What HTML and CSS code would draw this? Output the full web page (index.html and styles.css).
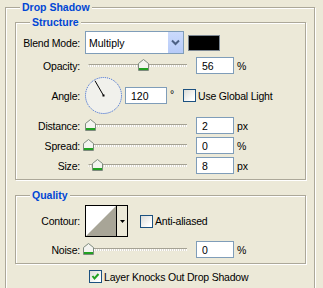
FILE: index.html
```html
<!DOCTYPE html>
<html lang="en">
<head>
    <meta charset="UTF-8">
    <title>Drop Shadow</title>
    <link rel="stylesheet" href="styles.css">
</head>
<body>
    <fieldset class="panel">
        <legend>Drop Shadow</legend>

        <!-- Structure -->
        <fieldset class="group">
            <legend>Structure</legend>
            <div class="row row-blend">
                <span class="lbl">Blend Mode:</span>
                <div class="combo">
                    <span class="combo-text">Multiply</span>
                    <span class="combo-btn">
                        <svg width="9" height="7" viewBox="0 0 9 7"><path d="M1 1.5 L4.5 5 L8 1.5" fill="none" stroke="#4d6185" stroke-width="2"/></svg>
                    </span>
                </div>
                <span class="swatch"></span>
            </div>
            <div class="row">
                <span class="lbl">Opacity:</span>
                <div class="slider">
                    <div class="track"></div>
                    <span class="thumb" style="left: 56%"><svg width="11" height="12" viewBox="0 0 11 12"><polygon points="0.5,11.5 0.5,4.5 5.5,0.5 10.5,4.5 10.5,11.5" fill="#f4f4f0" stroke="#7e8a7e"/><rect x="1" y="9" width="9" height="2" fill="#21a121"/></svg></span>
                </div>
                <input class="num" type="text" value="56">
                <span class="unit">%</span>
            </div>
            <div class="row row-angle">
                <span class="lbl">Angle:</span>
                <svg class="dial" width="37" height="37" viewBox="0 0 37 37">
                    <circle cx="18.5" cy="18.5" r="18" fill="#f1f1ec" stroke="#2c5fd3" stroke-dasharray="1 1"/>
                    <line x1="18.5" y1="18.5" x2="10" y2="3.8" stroke="#000"/>
                    <rect x="17.5" y="17.5" width="2" height="2" fill="#000"/>
                </svg>
                <input class="num num-wide" type="text" value="120">
                <span class="deg">°</span>
                <span class="check"></span>
                <span class="check-text">Use Global Light</span>
            </div>
            <div class="row">
                <span class="lbl">Distance:</span>
                <div class="slider">
                    <div class="track"></div>
                    <span class="thumb" style="left: 2.5%"><svg width="11" height="12" viewBox="0 0 11 12"><polygon points="0.5,11.5 0.5,4.5 5.5,0.5 10.5,4.5 10.5,11.5" fill="#f4f4f0" stroke="#7e8a7e"/><rect x="1" y="9" width="9" height="2" fill="#21a121"/></svg></span>
                </div>
                <input class="num" type="text" value="2">
                <span class="unit">px</span>
            </div>
            <div class="row">
                <span class="lbl">Spread:</span>
                <div class="slider">
                    <div class="track"></div>
                    <span class="thumb" style="left: 0%"><svg width="11" height="12" viewBox="0 0 11 12"><polygon points="0.5,11.5 0.5,4.5 5.5,0.5 10.5,4.5 10.5,11.5" fill="#f4f4f0" stroke="#7e8a7e"/><rect x="1" y="9" width="9" height="2" fill="#21a121"/></svg></span>
                </div>
                <input class="num" type="text" value="0">
                <span class="unit">%</span>
            </div>
            <div class="row">
                <span class="lbl">Size:</span>
                <div class="slider">
                    <div class="track"></div>
                    <span class="thumb" style="left: 8.8%"><svg width="11" height="12" viewBox="0 0 11 12"><polygon points="0.5,11.5 0.5,4.5 5.5,0.5 10.5,4.5 10.5,11.5" fill="#f4f4f0" stroke="#7e8a7e"/><rect x="1" y="9" width="9" height="2" fill="#21a121"/></svg></span>
                </div>
                <input class="num" type="text" value="8">
                <span class="unit">px</span>
            </div>
        </fieldset>

        <!-- Quality -->
        <fieldset class="group quality">
            <legend>Quality</legend>
            <div class="row row-contour">
                <span class="lbl">Contour:</span>
                <div class="contour">
                    <svg width="30" height="30" viewBox="0 0 30 30"><rect width="30" height="30" fill="#fff"/><polygon points="0,30 30,0 30,30" fill="#a8a597"/></svg>
                    <span class="contour-btn"><svg width="5" height="3" viewBox="0 0 5 3"><polygon points="0,0 5,0 2.5,3" fill="#000"/></svg></span>
                </div>
                <span class="check check-aa"></span>
                <span class="check-text">Anti-aliased</span>
            </div>
            <div class="row">
                <span class="lbl">Noise:</span>
                <div class="slider">
                    <div class="track"></div>
                    <span class="thumb" style="left: 0%"><svg width="11" height="12" viewBox="0 0 11 12"><polygon points="0.5,11.5 0.5,4.5 5.5,0.5 10.5,4.5 10.5,11.5" fill="#f4f4f0" stroke="#7e8a7e"/><rect x="1" y="9" width="9" height="2" fill="#21a121"/></svg></span>
                </div>
                <input class="num" type="text" value="0">
                <span class="unit">%</span>
            </div>
        </fieldset>

        <div class="row knock">
            <span class="check"><svg width="11" height="11" viewBox="0 0 11 11"><path d="M2.5 5 L4.5 7.5 L8.5 3" fill="none" stroke="#21a121" stroke-width="2"/></svg></span>
            <span class="check-text">Layer Knocks Out Drop Shadow</span>
        </div>
    </fieldset>
</body>
</html>
```

FILE: styles.css
```css
html, body {
    margin: 0;
    padding: 0;
    overflow: hidden;
}
body {
    background-color: #ece9d8;
    font-family: "Liberation Sans", Arial, sans-serif;
    font-size: 10.5px;
    color: #000;
}
fieldset {
    box-sizing: border-box;
    min-width: 0;
    border: 1px solid #aca899;
    box-shadow: 1px 1px 0 #fff, inset 1px 1px 0 #fff;
}
legend {
    font-weight: bold;
    color: #0046d5;
    line-height: 13px;
    padding: 0 2px;
    background-color: #ece9d8;
}
.panel {
    margin: 1px 0 0 5px;
    width: 310px;
    padding: 2px 8px 20px 9px;
}
.panel > legend {
    margin-left: 5px;
}
.group {
    margin: 0;
    padding: 2px 0 5px 0;
}
.group > legend {
    margin-left: 14px;
}
.quality {
    margin-top: 9px;
    padding: 3px 0 5px 0;
}

/* rows */
.row {
    display: flex;
    align-items: center;
    height: 17px;
}
.row + .row {
    margin-top: 3px;
}
.quality .row + .row {
    margin-top: 4px;
}
.row-blend {
    height: 23px;
}
.row-angle {
    height: 37px;
}
.row-contour {
    height: 32px;
}
.lbl {
    width: 64px;
    text-align: right;
    letter-spacing: -0.2px;
    white-space: nowrap;
}

/* blend mode combo */
.combo {
    box-sizing: border-box;
    display: flex;
    align-items: center;
    margin-left: 5px;
    width: 99px;
    height: 23px;
    border: 1px solid #7f9db9;
    background: #fff;
}
.combo-text {
    flex: 1;
    padding-left: 3px;
}
.combo-btn {
    display: flex;
    align-items: center;
    justify-content: center;
    width: 15px;
    height: 21px;
    background: linear-gradient(#cbdafc, #b7cbf8);
}
.swatch {
    box-sizing: border-box;
    margin-left: 4px;
    width: 32px;
    height: 16px;
    border: 1px solid #7d8893;
    background: #000;
}

/* sliders */
.slider {
    position: relative;
    margin-left: 8px;
    width: 99px;
    height: 17px;
}
.track {
    position: absolute;
    top: 7px;
    left: 0;
    right: 0;
    height: 2px;
    border-top: 1px solid #a5a294;
    border-radius: 2px 0 0 2px;
    background: repeating-linear-gradient(90deg, #fff 0 1px, #dedbd0 1px 2px);
}
.thumb {
    position: absolute;
    top: 2px;
    margin-left: -5px;
    width: 11px;
    height: 12px;
}
.thumb svg {
    display: block;
}
.num {
    box-sizing: border-box;
    margin: 0 0 0 9px;
    width: 38px;
    height: 17px;
    padding: 0 0 0 5px;
    border: 1px solid #7f9db9;
    background: #fff;
    font: inherit;
    color: #000;
    outline: none;
}
.unit {
    margin-left: 3px;
}

/* angle */
.dial {
    margin-left: 5px;
    display: block;
}
.num-wide {
    margin-left: 3px;
    width: 42px;
}
.deg {
    width: 13px;
    padding-left: 3px;
    align-self: flex-start;
    margin-top: 11px;
}

/* checkboxes */
.check {
    box-sizing: border-box;
    display: flex;
    width: 13px;
    height: 13px;
    border: 1px solid #1c5180;
    background: linear-gradient(135deg, #dcdcd7, #fff 80%);
}
.check-text {
    margin-left: 2px;
    letter-spacing: -0.2px;
    white-space: nowrap;
}
.check-aa {
    margin-left: 12px;
}
.knock {
    margin: 6px 0 0 74px;
    height: 13px;
}

/* contour picker */
.contour {
    display: flex;
    margin-left: 5px;
    border: 1px solid #000;
    background: #fff;
}
.contour svg {
    display: block;
}
.contour-btn {
    display: flex;
    align-items: center;
    justify-content: center;
    width: 10px;
    border-left: 1px solid #000;
    background: #ece9d8;
}
```
